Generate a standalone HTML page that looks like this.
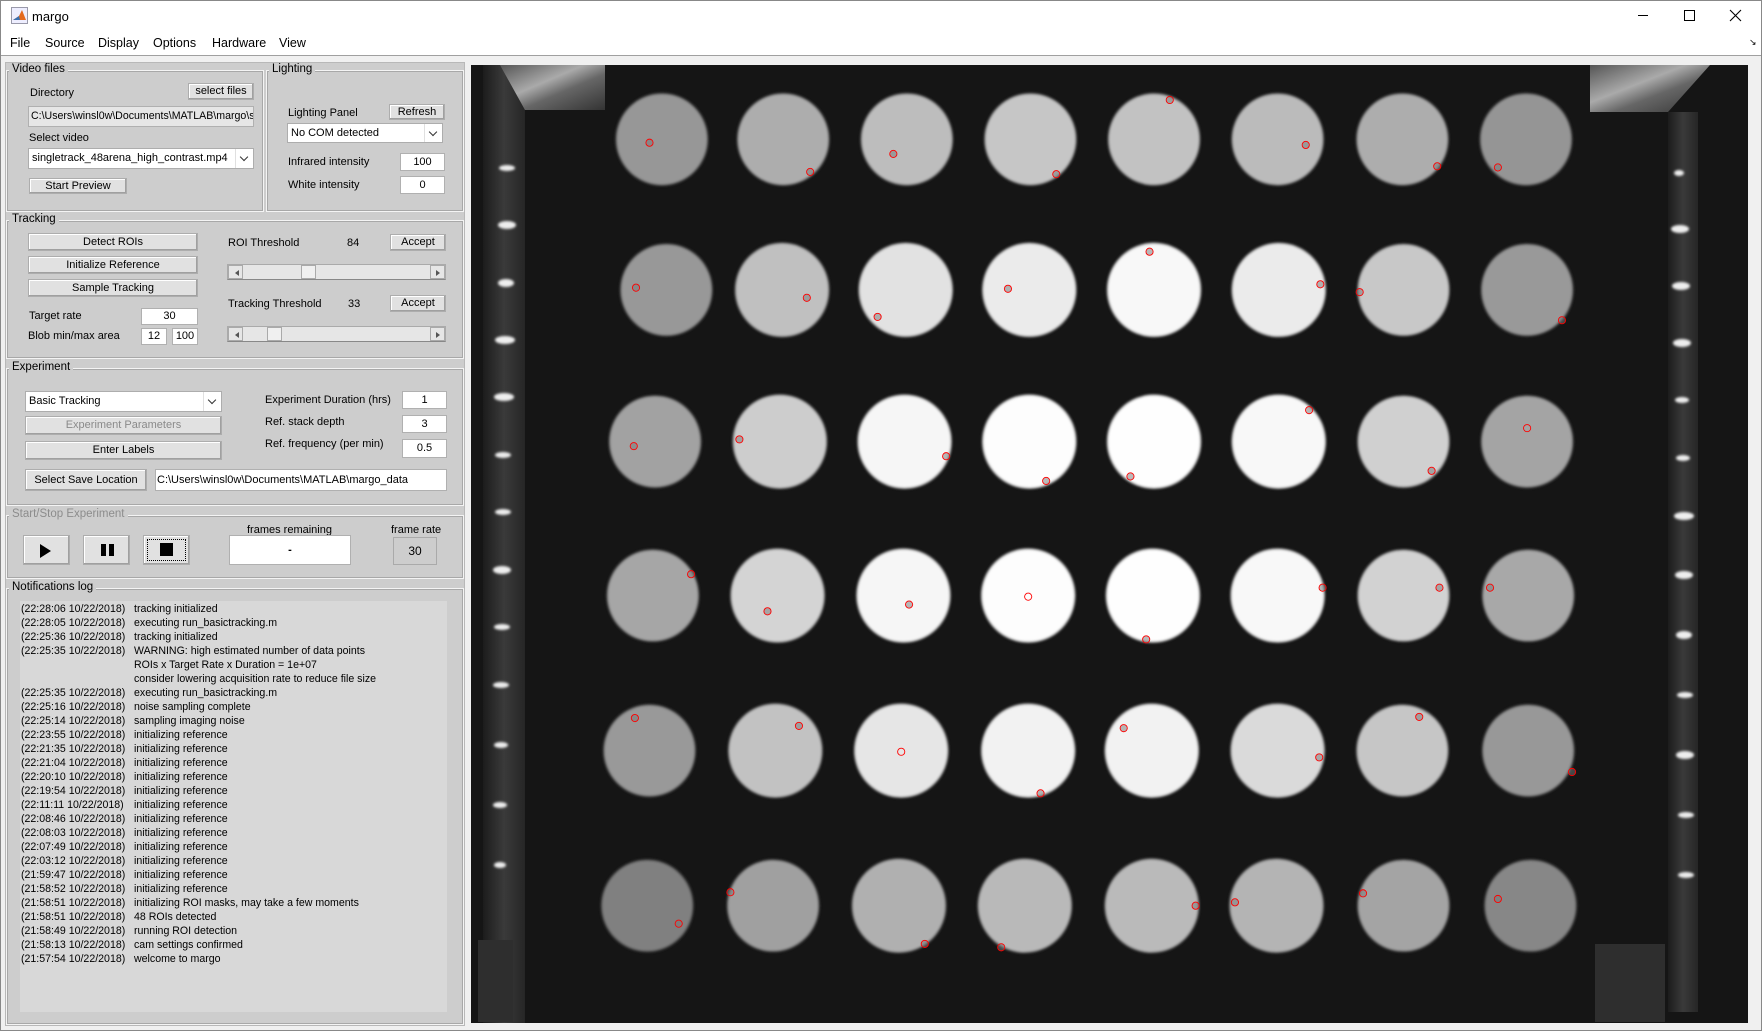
<!DOCTYPE html>
<html><head><meta charset="utf-8"><style>
*{box-sizing:border-box;margin:0;padding:0}
body{width:1762px;height:1031px;overflow:hidden;background:#f0f0f0;font-family:"Liberation Sans",Arial,sans-serif;font-size:11px;color:#000;position:relative}
.a{position:absolute}
.title{left:0;top:0;width:1762px;height:31px;background:#fff;border:1px solid #888;border-bottom:none}
.menu{left:0;top:31px;width:1762px;height:25px;background:#fff;border-left:1px solid #888;border-right:1px solid #888;border-bottom:1px solid #a0a0a0}
.menu span{position:absolute;top:5px;font-size:12.5px}
.left{left:5px;top:62px;width:460px;height:964px;background:#cdcdcd;border:1px solid #b8b8b8}
.grp{position:absolute;border:1px solid #f4f4f4;outline:1px solid #a8a8a8;outline-offset:-2px}
.lg{position:absolute;background:#cdcdcd;padding:0 3px;font-size:11.5px}
.btn{position:absolute;background:#e1e1e1;border:1px solid #adadad;box-shadow:inset -1px -1px 0 #a0a0a0,inset 1px 1px 0 #fff;text-align:center;font-size:11px}
.ed{position:absolute;background:#fff;border:1px solid #b0b0b0;text-align:center;font-size:11px}
.lb{position:absolute;font-size:11px;white-space:nowrap}
.dd{position:absolute;background:#fff;border:1px solid #adadad;font-size:11px;padding-left:3px;white-space:nowrap;overflow:hidden}
.dd i{position:absolute;right:0;top:0;bottom:0;width:18px;background:#fff;border-left:1px solid #e0e0e0}
.dd i:after{content:"";position:absolute;left:5px;top:5px;width:5px;height:5px;border-right:1px solid #333;border-bottom:1px solid #333;transform:rotate(45deg)}
.sl{position:absolute;background:#e6e6e6;border:1px solid #aaa;border-bottom-color:#888}
.sl .l,.sl .r{position:absolute;top:0;width:15px;height:100%;background:#e6e6e6;border:1px solid #aaa}
.sl .l{left:0}.sl .r{right:0}
.sl .l:after,.sl .r:after{content:"";position:absolute;top:4px;border:3px solid transparent}
.sl .l:after{left:3px;border-right:4px solid #555}
.sl .r:after{left:5px;border-left:4px solid #555}
.sl .t{position:absolute;top:0;width:15px;height:100%;background:#f0f0f0;border:1px solid #aaa}
.log{left:20px;top:601px;width:427px;height:411px;background:#d8d8d8;font-size:10.6px;line-height:14px;padding-top:1px}
.log div{white-space:pre;height:14px}
.log b{font-weight:normal;display:inline-block;width:114px;padding-left:1px}
</style></head><body>
<div class="a title">
 <svg class="a" style="left:10px;top:6px" width="18" height="18"><rect x="0.5" y="0.5" width="16" height="16" fill="#eef" stroke="#99a"/><path d="M2 13 L8 9 L11 3 L15 13 Z" fill="#e36a1f"/><path d="M2 13 L8 9 L9 13Z" fill="#3a6fb0"/></svg>
 <span class="a" style="left:31px;top:8px;font-size:13px">margo</span>
 <div class="a" style="left:1637px;top:14px;width:10px;height:1px;background:#000"></div>
 <div class="a" style="left:1683px;top:9px;width:11px;height:11px;border:1px solid #000"></div>
 <svg class="a" style="left:1728px;top:8px" width="13" height="13"><path d="M1 1L12 12M12 1L1 12" stroke="#000" stroke-width="1.1"/></svg>
</div>
<div class="a menu">
 <span style="left:9px">File</span><span style="left:44px">Source</span><span style="left:97px">Display</span><span style="left:152px">Options</span><span style="left:211px">Hardware</span><span style="left:278px">View</span>
 <span style="left:1748px;top:6px;font-size:9px">↘</span>
</div>

<div class="a left"></div>
<div class="grp" style="left:6px;top:70px;width:258px;height:142px"></div>
<div class="lg" style="left:9px;top:63px">Video files</div>
<div class="lb" style="left:30px;top:87px">Directory</div>
<div class="btn" style="left:188px;top:83px;width:66px;height:17px;line-height:14px">select files</div>
<div class="ed" style="left:28px;top:106px;width:226px;height:21px;background:#e6e6e6;text-align:left;padding-left:2px;line-height:19px;overflow:hidden;white-space:nowrap;font-size:10.6px">C:\Users\winsl0w\Documents\MATLAB\margo\sa</div>
<div class="lb" style="left:29px;top:132px">Select video</div>
<div class="dd" style="left:28px;top:148px;width:226px;height:21px;line-height:19px;font-size:11px">singletrack_48arena_high_contrast.mp4<i></i></div>
<div class="btn" style="left:29px;top:178px;width:98px;height:16px;line-height:14px">Start Preview</div>
<div class="grp" style="left:266px;top:70px;width:198px;height:142px"></div>
<div class="lg" style="left:269px;top:63px">Lighting</div>
<div class="lb" style="left:288px;top:107px">Lighting Panel</div>
<div class="btn" style="left:389px;top:104px;width:56px;height:16px;line-height:14px">Refresh</div>
<div class="dd" style="left:287px;top:123px;width:156px;height:20px;line-height:18px">No COM detected<i></i></div>
<div class="lb" style="left:288px;top:156px">Infrared intensity</div>
<div class="ed" style="left:400px;top:153px;width:45px;height:18px;line-height:16px">100</div>
<div class="lb" style="left:288px;top:179px">White intensity</div>
<div class="ed" style="left:400px;top:176px;width:45px;height:18px;line-height:16px">0</div>
<div class="grp" style="left:6px;top:220px;width:458px;height:139px"></div>
<div class="lg" style="left:9px;top:213px">Tracking</div>
<div class="btn" style="left:28px;top:233px;width:170px;height:18px;line-height:16px">Detect ROIs</div>
<div class="btn" style="left:28px;top:256px;width:170px;height:18px;line-height:16px">Initialize Reference</div>
<div class="btn" style="left:28px;top:279px;width:170px;height:18px;line-height:16px">Sample Tracking</div>
<div class="lb" style="left:29px;top:310px">Target rate</div>
<div class="ed" style="left:141px;top:308px;width:57px;height:17px;line-height:15px">30</div>
<div class="lb" style="left:28px;top:330px">Blob min/max area</div>
<div class="ed" style="left:141px;top:328px;width:26px;height:17px;line-height:15px">12</div>
<div class="ed" style="left:172px;top:328px;width:26px;height:17px;line-height:15px">100</div>
<div class="lb" style="left:228px;top:237px">ROI Threshold</div>
<div class="lb" style="left:347px;top:237px">84</div>
<div class="btn" style="left:390px;top:234px;width:56px;height:17px;line-height:15px">Accept</div>
<div class="sl" style="left:227px;top:264px;width:219px;height:16px"><div class="l"></div><div class="t" style="left:73px"></div><div class="r"></div></div>
<div class="lb" style="left:228px;top:298px">Tracking Threshold</div>
<div class="lb" style="left:348px;top:298px">33</div>
<div class="btn" style="left:390px;top:295px;width:56px;height:17px;line-height:15px">Accept</div>
<div class="sl" style="left:227px;top:326px;width:219px;height:16px"><div class="l"></div><div class="t" style="left:39px"></div><div class="r"></div></div>
<div class="grp" style="left:6px;top:368px;width:458px;height:138px"></div>
<div class="lg" style="left:9px;top:361px">Experiment</div>
<div class="dd" style="left:25px;top:391px;width:197px;height:21px;line-height:19px">Basic Tracking<i></i></div>
<div class="btn" style="left:25px;top:416px;width:197px;height:19px;line-height:17px;color:#8a8a8a">Experiment Parameters</div>
<div class="btn" style="left:25px;top:441px;width:197px;height:19px;line-height:17px">Enter Labels</div>
<div class="btn" style="left:25px;top:469px;width:122px;height:22px;line-height:20px">Select Save Location</div>
<div class="ed" style="left:155px;top:469px;width:292px;height:22px;line-height:20px;text-align:left;padding-left:1px">C:\Users\winsl0w\Documents\MATLAB\margo_data</div>
<div class="lb" style="left:265px;top:394px">Experiment Duration (hrs)</div>
<div class="ed" style="left:402px;top:391px;width:45px;height:18px;line-height:16px">1</div>
<div class="lb" style="left:265px;top:416px">Ref. stack depth</div>
<div class="ed" style="left:402px;top:415px;width:45px;height:18px;line-height:16px">3</div>
<div class="lb" style="left:265px;top:438px">Ref. frequency (per min)</div>
<div class="ed" style="left:402px;top:439px;width:45px;height:19px;line-height:17px">0.5</div>
<div class="grp" style="left:6px;top:515px;width:458px;height:64px"></div>
<div class="lg" style="left:9px;top:508px;color:#8c8c8c">Start/Stop Experiment</div>
<div class="btn" style="left:23px;top:535px;width:47px;height:30px"><svg class="a" style="left:16px;top:8px" width="12" height="14"><path d="M0 0L11 7L0 14Z"/></svg></div>
<div class="btn" style="left:83px;top:535px;width:47px;height:30px"><div class="a" style="left:17px;top:8px;width:5px;height:12px;background:#000"></div><div class="a" style="left:25px;top:8px;width:5px;height:12px;background:#000"></div></div>
<div class="btn" style="left:143px;top:535px;width:47px;height:30px"><div class="a" style="left:3px;top:3px;width:39px;height:22px;border:1px dotted #000"></div><div class="a" style="left:16px;top:7px;width:13px;height:13px;background:#000"></div></div>
<div class="lb" style="left:247px;top:524px">frames remaining</div>
<div class="ed" style="left:229px;top:535px;width:122px;height:30px;line-height:28px;font-weight:bold">-</div>
<div class="lb" style="left:391px;top:524px">frame rate</div>
<div class="ed" style="left:393px;top:537px;width:44px;height:28px;line-height:26px;background:#cdcdcd;border-color:#aaa;font-size:12px">30</div>
<div class="grp" style="left:6px;top:588px;width:458px;height:437px"></div>
<div class="lg" style="left:9px;top:581px">Notifications log</div>
<div class="a log">
<div><b>(22:28:06 10/22/2018)</b>tracking initialized</div>
<div><b>(22:28:05 10/22/2018)</b>executing run_basictracking.m</div>
<div><b>(22:25:36 10/22/2018)</b>tracking initialized</div>
<div><b>(22:25:35 10/22/2018)</b>WARNING: high estimated number of data points</div>
<div><b></b>ROIs x Target Rate x Duration = 1e+07</div>
<div><b></b>consider lowering acquisition rate to reduce file size</div>
<div><b>(22:25:35 10/22/2018)</b>executing run_basictracking.m</div>
<div><b>(22:25:16 10/22/2018)</b>noise sampling complete</div>
<div><b>(22:25:14 10/22/2018)</b>sampling imaging noise</div>
<div><b>(22:23:55 10/22/2018)</b>initializing reference</div>
<div><b>(22:21:35 10/22/2018)</b>initializing reference</div>
<div><b>(22:21:04 10/22/2018)</b>initializing reference</div>
<div><b>(22:20:10 10/22/2018)</b>initializing reference</div>
<div><b>(22:19:54 10/22/2018)</b>initializing reference</div>
<div><b>(22:11:11 10/22/2018)</b>initializing reference</div>
<div><b>(22:08:46 10/22/2018)</b>initializing reference</div>
<div><b>(22:08:03 10/22/2018)</b>initializing reference</div>
<div><b>(22:07:49 10/22/2018)</b>initializing reference</div>
<div><b>(22:03:12 10/22/2018)</b>initializing reference</div>
<div><b>(21:59:47 10/22/2018)</b>initializing reference</div>
<div><b>(21:58:52 10/22/2018)</b>initializing reference</div>
<div><b>(21:58:51 10/22/2018)</b>initializing ROI masks, may take a few moments</div>
<div><b>(21:58:51 10/22/2018)</b>48 ROIs detected</div>
<div><b>(21:58:49 10/22/2018)</b>running ROI detection</div>
<div><b>(21:58:13 10/22/2018)</b>cam settings confirmed</div>
<div><b>(21:57:54 10/22/2018)</b>welcome to margo</div>
</div>
<div class="a" style="left:1761px;top:31px;width:1px;height:1000px;background:#888"></div>
<div class="a" style="left:0;top:1030px;width:1762px;height:1px;background:#888"></div>
<div class="a" style="left:0;top:31px;width:1px;height:1000px;background:#888"></div>

<svg class="a" style="left:0;top:0" width="1762" height="1031">
<defs>
<filter id="bl" x="-10%" y="-10%" width="120%" height="120%"><feGaussianBlur stdDeviation="1.3"/></filter>
<linearGradient id="st" x1="0" x2="1"><stop offset="0" stop-color="#1c1c1c"/><stop offset=".5" stop-color="#3a3a3a"/><stop offset="1" stop-color="#262626"/></linearGradient>
<linearGradient id="cr" x1="0" y1="0" x2="1" y2="1"><stop offset="0" stop-color="#555"/><stop offset=".4" stop-color="#aaa"/><stop offset=".6" stop-color="#666"/><stop offset="1" stop-color="#333"/></linearGradient>
</defs>
<rect x="471" y="65" width="1277" height="958" fill="#151515"/>
<rect x="483" y="65" width="42" height="958" fill="url(#st)"/>
<rect x="1668" y="112" width="30" height="900" fill="url(#st)"/>
<polygon points="500,65 605,65 605,110 525,110" fill="url(#cr)"/>
<polygon points="1590,65 1710,65 1668,112 1590,112" fill="url(#cr)"/>
<rect x="478" y="940" width="35" height="82" fill="#2e2e2e"/>
<rect x="1595" y="944" width="70" height="78" fill="#2e2e2e"/>
<g fill="#eee" filter="url(#bl)">
<ellipse cx="507" cy="168" rx="8" ry="3"/><ellipse cx="507" cy="225" rx="9" ry="4"/><ellipse cx="506" cy="283" rx="8" ry="4"/><ellipse cx="505" cy="340" rx="10" ry="4"/><ellipse cx="504" cy="397" rx="10" ry="4"/><ellipse cx="503" cy="455" rx="8" ry="3"/><ellipse cx="503" cy="512" rx="8" ry="3"/><ellipse cx="502" cy="570" rx="9" ry="4"/><ellipse cx="502" cy="627" rx="8" ry="3"/><ellipse cx="501" cy="685" rx="8" ry="3"/><ellipse cx="501" cy="745" rx="7" ry="3"/><ellipse cx="500" cy="805" rx="7" ry="3"/><ellipse cx="500" cy="865" rx="6" ry="3"/>
<ellipse cx="1679" cy="173" rx="5" ry="3"/><ellipse cx="1680" cy="229" rx="9" ry="4"/><ellipse cx="1681" cy="286" rx="9" ry="4"/><ellipse cx="1682" cy="343" rx="9" ry="4"/><ellipse cx="1682" cy="400" rx="7" ry="3"/><ellipse cx="1683" cy="458" rx="7" ry="3"/><ellipse cx="1684" cy="516" rx="10" ry="4"/><ellipse cx="1684" cy="575" rx="9" ry="4"/><ellipse cx="1684" cy="635" rx="8" ry="4"/><ellipse cx="1685" cy="695" rx="8" ry="3"/><ellipse cx="1685" cy="755" rx="9" ry="4"/><ellipse cx="1686" cy="815" rx="8" ry="3"/><ellipse cx="1686" cy="875" rx="8" ry="3"/>
</g>
<g transform="scale(1.1237)">
<g filter="url(#bl)" stroke="#333" stroke-width="1.5">
<circle cx="589" cy="124" r="41" fill="#979797"/><circle cx="697" cy="124" r="41" fill="#adadad"/><circle cx="807" cy="124" r="41" fill="#bdbdbd"/><circle cx="917" cy="124" r="41" fill="#c6c6c6"/><circle cx="1027" cy="124" r="41" fill="#c2c2c2"/><circle cx="1137" cy="124" r="41" fill="#bbbbbb"/><circle cx="1248" cy="124" r="41" fill="#adadad"/><circle cx="1358" cy="124" r="41" fill="#959595"/>
<circle cx="593" cy="258" r="41" fill="#989898"/><circle cx="696" cy="258" r="42" fill="#c0c0c0"/><circle cx="806" cy="258" r="42" fill="#e2e2e2"/><circle cx="916" cy="258" r="42" fill="#ebebeb"/><circle cx="1027" cy="258" r="42" fill="#f8f8f8"/><circle cx="1138" cy="258" r="42" fill="#ebebeb"/><circle cx="1249" cy="258" r="41" fill="#c8c8c8"/><circle cx="1359" cy="258" r="41" fill="#999999"/>
<circle cx="583" cy="393" r="41" fill="#a2a2a2"/><circle cx="694" cy="393" r="42" fill="#cdcdcd"/><circle cx="805" cy="393" r="42" fill="#f6f6f6"/><circle cx="916" cy="393" r="42" fill="#fdfdfd"/><circle cx="1027" cy="393" r="42" fill="#fefefe"/><circle cx="1138" cy="393" r="42" fill="#f8f8f8"/><circle cx="1249" cy="393" r="41" fill="#d0d0d0"/><circle cx="1359" cy="393" r="41" fill="#a4a4a4"/>
<circle cx="581" cy="530" r="41" fill="#a6a6a6"/><circle cx="692" cy="530" r="42" fill="#d4d4d4"/><circle cx="804" cy="530" r="42" fill="#f6f6f6"/><circle cx="915" cy="530" r="42" fill="#fdfdfd"/><circle cx="1026" cy="530" r="42" fill="#fefefe"/><circle cx="1137" cy="530" r="42" fill="#f8f8f8"/><circle cx="1249" cy="530" r="41" fill="#d2d2d2"/><circle cx="1360" cy="530" r="41" fill="#a8a8a8"/>
<circle cx="578" cy="668" r="41" fill="#999999"/><circle cx="690" cy="668" r="42" fill="#c2c2c2"/><circle cx="802" cy="668" r="42" fill="#e6e6e6"/><circle cx="915" cy="668" r="42" fill="#f2f2f2"/><circle cx="1025" cy="668" r="42" fill="#f2f2f2"/><circle cx="1137" cy="668" r="42" fill="#dadada"/><circle cx="1248" cy="668" r="41" fill="#c6c6c6"/><circle cx="1360" cy="668" r="41" fill="#989898"/>
<circle cx="576" cy="806" r="41" fill="#808080"/><circle cx="688" cy="806" r="41" fill="#a0a0a0"/><circle cx="800" cy="806" r="42" fill="#b0b0b0"/><circle cx="912" cy="806" r="42" fill="#b9b9b9"/><circle cx="1025" cy="806" r="42" fill="#bababa"/><circle cx="1136" cy="806" r="42" fill="#b4b4b4"/><circle cx="1249" cy="806" r="41" fill="#a4a4a4"/><circle cx="1362" cy="806" r="41" fill="#878787"/>
</g>
<g fill="#777" fill-opacity="0.5" stroke="#f00" stroke-width="0.8">
<circle cx="578" cy="127" r="3.2"/><circle cx="721" cy="153" r="3.2"/><circle cx="795" cy="137" r="3.2"/><circle cx="940" cy="155" r="3.2"/><circle cx="1041" cy="89" r="3.2"/><circle cx="1162" cy="129" r="3.2"/><circle cx="1279" cy="148" r="3.2"/><circle cx="1333" cy="149" r="3.2"/>
<circle cx="566" cy="256" r="3.2"/><circle cx="718" cy="265" r="3.2"/><circle cx="781" cy="282" r="3.2"/><circle cx="897" cy="257" r="3.2"/><circle cx="1023" cy="224" r="3.2"/><circle cx="1175" cy="253" r="3.2"/><circle cx="1210" cy="260" r="3.2"/><circle cx="1390" cy="285" r="3.2"/>
<circle cx="564" cy="397" r="3.2"/><circle cx="658" cy="391" r="3.2"/><circle cx="842" cy="406" r="3.2"/><circle cx="931" cy="428" r="3.2"/><circle cx="1006" cy="424" r="3.2"/><circle cx="1165" cy="365" r="3.2"/><circle cx="1274" cy="419" r="3.2"/><circle cx="1359" cy="381" r="3.2" fill="none"/>
<circle cx="615" cy="511" r="3.2"/><circle cx="683" cy="544" r="3.2"/><circle cx="809" cy="538" r="3.2"/><circle cx="915" cy="531" r="3.2" fill="none"/><circle cx="1020" cy="569" r="3.2"/><circle cx="1177" cy="523" r="3.2"/><circle cx="1281" cy="523" r="3.2"/><circle cx="1326" cy="523" r="3.2"/>
<circle cx="565" cy="639" r="3.2"/><circle cx="711" cy="646" r="3.2"/><circle cx="802" cy="669" r="3.2" fill="none"/><circle cx="926" cy="706" r="3.2"/><circle cx="1000" cy="648" r="3.2"/><circle cx="1174" cy="674" r="3.2"/><circle cx="1263" cy="638" r="3.2"/><circle cx="1399" cy="687" r="3.2"/>
<circle cx="604" cy="822" r="3.2"/><circle cx="650" cy="794" r="3.2"/><circle cx="823" cy="840" r="3.2"/><circle cx="891" cy="843" r="3.2"/><circle cx="1064" cy="806" r="3.2"/><circle cx="1099" cy="803" r="3.2"/><circle cx="1213" cy="795" r="3.2"/><circle cx="1333" cy="800" r="3.2"/>
</g>
</g>
</svg>
</body></html>
